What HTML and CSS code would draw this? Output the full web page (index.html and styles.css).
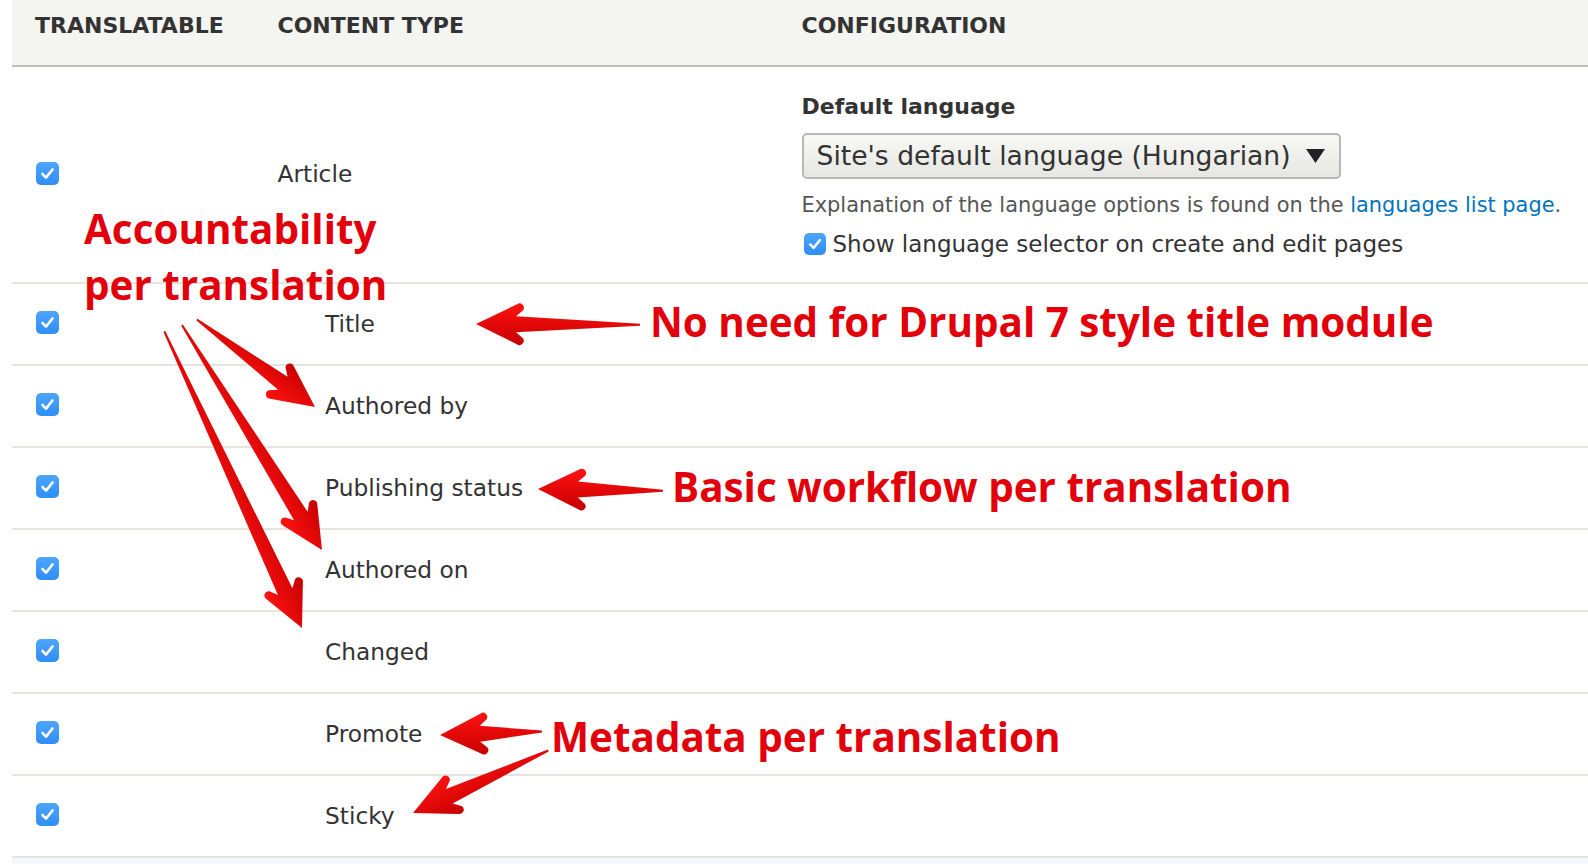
FILE: index.html
```html
<!DOCTYPE html>
<html lang="en">
<head>
  <meta charset="UTF-8">
  <title>Content language settings</title>
  <link rel="stylesheet" href="styles.css">
</head>
<body>
  <div class="page">
    <table class="settings">
      <thead>
        <tr>
          <th class="col-check">Translatable</th>
          <th class="col-type">Content type</th>
          <th class="col-config">Configuration</th>
        </tr>
      </thead>
      <tbody>
        <tr class="bundle">
          <td class="col-check"><span class="checkbox"><svg viewBox="0 0 23 23"><path d="M6.5 12 L10 15.6 L16.5 7.5"/></svg></span></td>
          <td class="col-type">Article</td>
          <td class="col-config">
            <div class="form-label">Default language</div>
            <div class="select">
              <span>Site's default language (Hungarian)</span>
              <svg class="caret" viewBox="0 0 19 14"><path d="M0 0 H19 L9.5 14 Z"/></svg>
            </div>
            <div class="description">Explanation of the language options is found on the <a href="#">languages list page</a>.</div>
            <div class="form-checkbox"><span class="checkbox"><svg viewBox="0 0 23 23"><path d="M6.5 12 L10 15.6 L16.5 7.5"/></svg></span>Show language selector on create and edit pages</div>
          </td>
        </tr>
        <tr class="field">
          <td class="col-check"><span class="checkbox"><svg viewBox="0 0 23 23"><path d="M6.5 12 L10 15.6 L16.5 7.5"/></svg></span></td>
          <td class="col-type">Title</td>
          <td class="col-config"></td>
        </tr>
        <tr class="field">
          <td class="col-check"><span class="checkbox"><svg viewBox="0 0 23 23"><path d="M6.5 12 L10 15.6 L16.5 7.5"/></svg></span></td>
          <td class="col-type">Authored by</td>
          <td class="col-config"></td>
        </tr>
        <tr class="field">
          <td class="col-check"><span class="checkbox"><svg viewBox="0 0 23 23"><path d="M6.5 12 L10 15.6 L16.5 7.5"/></svg></span></td>
          <td class="col-type">Publishing status</td>
          <td class="col-config"></td>
        </tr>
        <tr class="field">
          <td class="col-check"><span class="checkbox"><svg viewBox="0 0 23 23"><path d="M6.5 12 L10 15.6 L16.5 7.5"/></svg></span></td>
          <td class="col-type">Authored on</td>
          <td class="col-config"></td>
        </tr>
        <tr class="field">
          <td class="col-check"><span class="checkbox"><svg viewBox="0 0 23 23"><path d="M6.5 12 L10 15.6 L16.5 7.5"/></svg></span></td>
          <td class="col-type">Changed</td>
          <td class="col-config"></td>
        </tr>
        <tr class="field">
          <td class="col-check"><span class="checkbox"><svg viewBox="0 0 23 23"><path d="M6.5 12 L10 15.6 L16.5 7.5"/></svg></span></td>
          <td class="col-type">Promote</td>
          <td class="col-config"></td>
        </tr>
        <tr class="field">
          <td class="col-check"><span class="checkbox"><svg viewBox="0 0 23 23"><path d="M6.5 12 L10 15.6 L16.5 7.5"/></svg></span></td>
          <td class="col-type">Sticky</td>
          <td class="col-config"></td>
        </tr>
        <tr class="next">
          <td colspan="3"></td>
        </tr>
      </tbody>
    </table>

    <!-- red callouts drawn over the table -->
    <div class="annotations">
      <svg class="arrows" viewBox="0 0 1588 864">
        <defs>
          <linearGradient id="red" x1="0" y1="0" x2="0" y2="1">
            <stop offset="0" stop-color="#ff1212"/>
            <stop offset="1" stop-color="#c60000"/>
          </linearGradient>
        </defs>
        <g fill="url(#red)">
          <path transform="translate(476 324) rotate(0.3)" d="M0,0 L41,-20 A4.3,4.3 0 0 1 47,-14 L40,-8 L164,-1 L164,1 L40,8 L47,14 A4.3,4.3 0 0 1 41,20 Z"/>
          <path transform="translate(315 407) rotate(-143.5)" d="M0,0 L41,-20 A4.3,4.3 0 0 1 47,-14 L40,-8 L147,-1 L147,1 L40,8 L47,14 A4.3,4.3 0 0 1 41,20 Z"/>
          <path transform="translate(322 550) rotate(-121.9)" d="M0,0 L41,-20 A4.3,4.3 0 0 1 47,-14 L40,-8 L265,-1 L265,1 L40,8 L47,14 A4.3,4.3 0 0 1 41,20 Z"/>
          <path transform="translate(302 628) rotate(-114.9)" d="M0,0 L41,-20 A4.3,4.3 0 0 1 47,-14 L40,-8 L327,-1 L327,1 L40,8 L47,14 A4.3,4.3 0 0 1 41,20 Z"/>
          <path transform="translate(538 489) rotate(0.8)" d="M0,0 L41,-20 A4.3,4.3 0 0 1 47,-14 L40,-8 L125,-1 L125,1 L40,8 L47,14 A4.3,4.3 0 0 1 41,20 Z"/>
          <path transform="translate(440 735) rotate(-1.9)" d="M0,0 L41,-20 A4.3,4.3 0 0 1 47,-14 L40,-8 L102,-1 L102,1 L40,8 L47,14 A4.3,4.3 0 0 1 41,20 Z"/>
          <path transform="translate(413 813) rotate(-24.8)" d="M0,0 L41,-20 A4.3,4.3 0 0 1 47,-14 L40,-8 L149,-1 L149,1 L40,8 L47,14 A4.3,4.3 0 0 1 41,20 Z"/>
        </g>
      </svg>
      <div class="note note-accountability">Accountability<br>per translation</div>
      <div class="note note-title">No need for Drupal 7 style title module</div>
      <div class="note note-workflow">Basic workflow per translation</div>
      <div class="note note-metadata">Metadata per translation</div>
    </div>
  </div>
</body>
</html>
```

FILE: styles.css
```css
html, body { margin: 0; overflow: hidden; background: #fff; }
body {
  font-family: "DejaVu Sans", Verdana, sans-serif;
  color: #333;
}
.page { position: relative; width: 1588px; height: 864px; overflow: hidden; }

.settings {
  margin-left: 12px; width: 1576px;
  border-collapse: collapse; table-layout: fixed;
}
.settings th {
  background: #f4f4f1; border-bottom: 2px solid #bfbfba;
  text-align: left; text-transform: uppercase;
  font-size: 22px; font-weight: bold; line-height: 30px;
  padding: 11px 23px 24px; height: 30px;
}
.settings th.col-check { width: 196px; padding-left: 23px; }
.settings th.col-type { width: 478px; padding-left: 23.5px; }
.settings td {
  border-bottom: 2px solid #e6e4df;
  font-size: 23.3px; line-height: 30px;
  vertical-align: middle; padding: 0 23px;
}
.settings td.col-check { padding-left: 24px; }
.settings td.col-check .checkbox { display: block; margin-top: -2px; }
.bundle td.col-type { padding-left: 23.5px; }
.bundle td.col-config { padding: 25px 23px 22.6px; white-space: nowrap; }
.field td { height: 80px; }
.field td.col-type { padding-left: 71px; }
.next td { background: #f4f9fe; height: 20px; border: 0; }

.checkbox {
  display: inline-block; width: 23px; height: 23px;
  border-radius: 5px; vertical-align: middle;
  background: linear-gradient(#4da5fc, #2f8ef5);
}
.checkbox svg { display: block; width: 23px; height: 23px; }
.checkbox path {
  fill: none; stroke: #fff; stroke-width: 2.6;
  stroke-linecap: round; stroke-linejoin: round;
}

.form-label { font-size: 22px; font-weight: bold; line-height: 30px; }
.select {
  display: inline-flex; align-items: center; gap: 15px;
  margin-top: 11px; height: 42px; padding: 0 14px 0 13px;
  border: 2px solid #b8b8b4; border-radius: 5px;
  background: linear-gradient(#f8f8f6, #e6e6e2);
  font-size: 26.6px; color: #333;
}
.select .caret { width: 19px; height: 14px; fill: #222; }
.description {
  margin-top: 10.5px; font-size: 20.9px; line-height: 30px; color: #555;
}
.description a { color: #0074bd; text-decoration: none; }
.form-checkbox {
  margin-top: 9.5px; line-height: 30px; font-size: 23px;
  display: flex; align-items: center; gap: 7px;
}
.form-checkbox .checkbox { width: 22px; height: 22px; margin-left: 2px; }
.form-checkbox .checkbox svg { width: 22px; height: 22px; }

.annotations { position: absolute; inset: 0; pointer-events: none; }
.arrows { position: absolute; left: 0; top: 0; width: 1588px; height: 864px; }
.note {
  position: absolute; white-space: nowrap;
  font-family: "Open Sans", "Noto Sans", sans-serif;
  font-weight: bold; font-size: 40.4px; line-height: 56px;
  color: #e2000b;
}
.note-accountability { left: 84px; top: 201px; }
.note-title { left: 650px; top: 294px; }
.note-workflow { left: 672px; top: 459px; }
.note-metadata { left: 551px; top: 709px; }
```
